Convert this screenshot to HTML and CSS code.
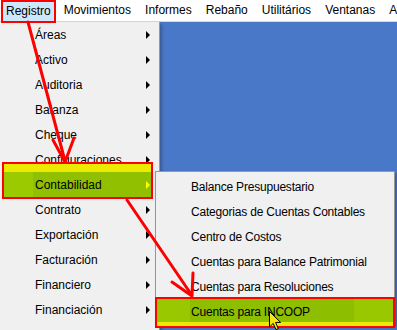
FILE: index.html
```html
<!doctype html>
<html lang="es">
<head>
<meta charset="UTF-8">
<title>Registro - Contabilidad</title>
<link rel="stylesheet" href="styles.css">
</head>
<body>
	<div class="screen">
		<ul class="menubar">
			<li class="top sel">Registro</li>
			<li class="top">Movimientos</li>
			<li class="top">Informes</li>
			<li class="top">Rebaño</li>
			<li class="top">Utilitários</li>
			<li class="top">Ventanas</li>
			<li class="top">Ayuda</li>
		</ul>
		<div class="desk"></div>

		<!-- menu Registro -->
		<ul class="menu drop">
			<li><span>Áreas</span><i class="caret"></i></li>
			<li><span>Activo</span><i class="caret"></i></li>
			<li><span>Auditoria</span><i class="caret"></i></li>
			<li><span>Balanza</span><i class="caret"></i></li>
			<li><span>Cheque</span><i class="caret"></i></li>
			<li><span>Configuraciones</span><i class="caret"></i></li>
			<li class="hot"><span>Contabilidad</span><i class="caret"></i></li>
			<li><span>Contrato</span><i class="caret"></i></li>
			<li><span>Exportación</span><i class="caret"></i></li>
			<li><span>Facturación</span><i class="caret"></i></li>
			<li><span>Financiero</span><i class="caret"></i></li>
			<li><span>Financiación</span><i class="caret"></i></li>
		</ul>

		<!-- submenu Contabilidad -->
		<ul class="menu sub">
			<li><span>Balance Presupuestario</span></li>
			<li><span>Categorias de Cuentas Contables</span></li>
			<li><span>Centro de Costos</span></li>
			<li><span>Cuentas para Balance Patrimonial</span></li>
			<li><span>Cuentas para Resoluciones</span></li>
			<li class="pick"><span>Cuentas para INCOOP</span></li>
		</ul>

		<!-- flechas rojas -->
		<svg class="marks" width="397" height="330" viewBox="0 0 397 330">
			<g fill="none" stroke="#f00" stroke-width="3" stroke-linecap="round" stroke-linejoin="round">
				<line x1="28" y1="22" x2="65" y2="161"/>
				<polyline points="53,140 65,162 74,138"/>
				<line x1="127" y1="200" x2="191" y2="294"/>
				<polyline points="172,282 192,296 193,273"/>
			</g>
		</svg>

		<svg class="cursor" width="13" height="20" viewBox="0 0 13 20">
			<path d="M0.5 0.5 L0.5 16 L4.2 12.4 L7 18.6 L9.3 17.6 L6.6 11.4 L11.6 11.4 Z" fill="#f6e610" stroke="#000" stroke-width="1"/>
		</svg>
	</div>
</body>
</html>
```

FILE: styles.css
```css
* {margin:0;padding:0;box-sizing:border-box;}
body{font-size:12px;font-family:"Liberation Sans",Arial,sans-serif;color:#000;background:#fff;}
ul,li{list-style:none;}

.screen{position:relative;width:397px;height:330px;overflow:hidden;display:flex;flex-direction:column;}

/* barra de menu */
.menubar{display:flex;height:22px;background:#fff;border-bottom:1px solid #d6d6d6;white-space:nowrap;}
.menubar .top{padding:0 7px;line-height:21px;flex-shrink:0;}
.menubar .sel{height:23px;margin-left:1px;margin-right:1px;padding:0 3px;line-height:19px;border:2px solid #f00;background:#cce8ff;position:relative;z-index:3;}

.desk{flex:1;background:#4a78c8;}

/* menus desplegables */
.menu{position:absolute;background:#f0f0f0;border:1px solid #979797;}
.menu li{display:flex;align-items:center;justify-content:space-between;height:25px;padding-left:35px;position:relative;}
.menu li span,.menu li .caret{position:relative;}
.caret{width:0;height:0;border-left:4px solid #000;border-top:4px solid transparent;border-bottom:4px solid transparent;}

.drop{left:0;top:22px;width:160px;height:320px;padding-right:9px;border-left:none;border-top:none;box-shadow:2px 2px 3px rgba(0,0,0,.25);z-index:1;}
.sub{left:155px;top:171px;width:240px;padding-top:2px;letter-spacing:-0.2px;box-shadow:2px 2px 3px rgba(0,0,0,.25);z-index:2;}

/* resaltados */
.hot::before{content:"";position:absolute;left:2px;right:-3px;top:-10px;bottom:-2px;border:2px solid #f00;
	background:linear-gradient(#ecea00 0 8px,transparent 8px),linear-gradient(to right,#9bca00 0 29px,#90c000 29px);}
.hot .caret{border-left-color:#ff0;}
.pick::before{content:"";position:absolute;left:-1px;right:-1px;top:-2px;bottom:-4px;border:2px solid #f00;
	background:linear-gradient(to top,#ecea00 0 4px,transparent 4px),linear-gradient(to right,#99c800 0 33px,#8ebe00 33px 197px,#99c800 197px);}

.marks{position:absolute;left:0;top:0;z-index:4;pointer-events:none;}
.cursor{position:absolute;left:269px;top:311px;z-index:5;}
```
